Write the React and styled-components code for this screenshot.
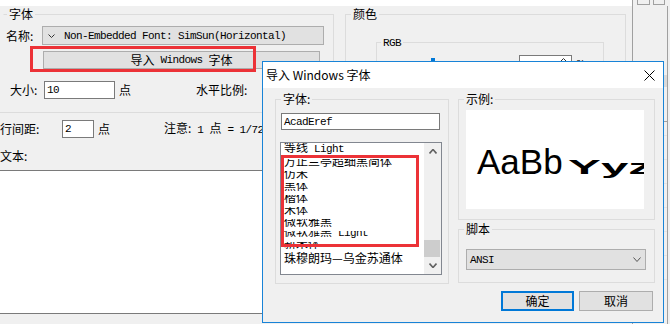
import styled, { createGlobalStyle } from "styled-components";

const GlobalStyle = createGlobalStyle`
  html, body { margin: 0; padding: 0; }
  body {
    background: #f0f0f0;
    font-family: "Noto Sans CJK SC", "Liberation Sans", sans-serif;
    font-size: 12px;
    line-height: 14px;
    color: #000;
  }
  * { box-sizing: border-box; }
`;

const Page = styled.div`
  position: relative;
  width: 670px;
  height: 324px;
  overflow: hidden;
  display: flex;
  background: #f0f0f0;
`;

// SimSun-like ascii: 6px per char
const Latin = styled.span`
  font-family: "Liberation Mono", monospace;
  font-size: 11px;
  letter-spacing: -0.6px;
  white-space: pre;
`;

/* ---------- background window ---------- */

const MainArea = styled.div`
  width: 632px;
  display: flex;
  flex-direction: column;
`;

const TopStrip = styled.div`
  height: 6px;
  background: #fff;
`;

const GroupsRow = styled.div`
  height: 106px;
  display: flex;
  align-items: flex-start;
  overflow: hidden;
`;

const GroupBox = styled.fieldset`
  margin: 0;
  padding: 0;
  border: 1px solid #dcdcdc;
  min-width: 0;
`;

const Legend = styled.legend`
  margin-left: ${({ $indent }) => $indent ?? 5}px;
  padding: 0 2px;
  line-height: 14px;
`;

const FontGroup = styled(GroupBox)`
  margin: 1px 0 0 3px;
  width: 331px;
  height: 99px;
  border-left-color: transparent;
  border-bottom: none;
  padding: 5px 0 0 2px;
`;

const FormRow = styled.div`
  display: flex;
  align-items: center;
  height: ${({ $h }) => $h ?? 18}px;
  margin-top: ${({ $top }) => $top ?? 0}px;
  padding-left: ${({ $pad }) => $pad ?? 0}px;
`;

const FieldLabel = styled.span`
  width: ${({ $w }) => $w}px;
  flex: none;
  white-space: nowrap;
`;

const Text = styled.span`
  margin-left: ${({ $left }) => $left ?? 0}px;
  white-space: nowrap;
`;

const ComboBox = styled.div`
  width: ${({ $w }) => $w}px;
  height: ${({ $h }) => $h ?? 19}px;
  background: #e1e1e1;
  border: 1px solid #adadad;
  display: flex;
  align-items: center;
  gap: 9px;
  padding-left: 5px;
`;

const PushButton = styled.div`
  width: ${({ $w }) => $w}px;
  height: 18px;
  background: #e1e1e1;
  border: 1px solid #adadad;
  display: flex;
  align-items: center;
  justify-content: center;
  white-space: nowrap;
`;

const TextBox = styled.div`
  width: ${({ $w }) => $w}px;
  height: ${({ $h }) => $h ?? 18}px;
  background: #fff;
  border: 1px solid #7a7a7a;
  display: flex;
  align-items: center;
  padding-left: 2px;
  flex: none;
`;

const Separator = styled.div`
  height: 1px;
  background: #dcdcdc;
`;

const TextCaption = styled.div`
  margin: 11px 0 7px;
  height: 14px;
`;

const TextArea = styled.div`
  height: 144px;
  background: #fff;
  border-top: 1px solid #7a7a7a;
  border-bottom: 1px solid #7a7a7a;
`;

const ColorGroup = styled(GroupBox)`
  margin: 1px 0 0 11px;
  width: 281px;
  height: 130px;
`;

const RgbGroup = styled(GroupBox)`
  margin: 13px 0 0 30px;
  width: 228px;
  height: 70px;
`;

const SliderRow = styled.div`
  display: flex;
  align-items: flex-start;
  height: 20px;
  margin-top: 5px;
  padding-left: 36px;
`;

const SliderLabel = styled.span`
  width: 12px;
  margin-top: 1px;
  flex: none;
`;

const Slider = styled.div`
  width: 80px;
  margin: 3px 0 0 6px;
  height: 14px;
  display: flex;
  align-items: center;
`;

const SliderThumb = styled.div`
  width: 4px;
  height: 14px;
  background: #0078d7;
`;

const SliderTrack = styled.div`
  flex: 1;
  height: 3px;
  background: #d6d6d6;
`;

const SpinBox = styled(TextBox)`
  margin-left: 8px;
  height: 20px;
  padding: 0 4px 0 5px;
  justify-content: space-between;
  align-items: flex-start;
  padding-top: 2px;
`;

const RightRail = styled.div`
  width: 38px;
  border-left: 1px solid #a0a0a0;
  display: flex;
  flex-direction: column;
`;

const RailTop = styled.div`
  height: 6px;
  display: flex;
  gap: 3px;
  padding-left: 4px;
`;

const RailBox = styled.div`
  width: ${({ $w }) => $w}px;
  height: 5px;
  border: 1px solid #a0a0a0;
  border-top: none;
`;

const RailBody = styled.div`
  flex: 1;
  margin-right: 2px;
  border-right: 1px solid #a0a0a0;
  padding-top: 69px;
`;

const RailHeader = styled.div`
  height: 12px;
  background: #dadada;
`;

const RailRow = styled.div`
  height: ${({ $h }) => $h ?? 24}px;
  border-bottom: 1px solid ${({ $dark }) => ($dark ? "#a0a0a0" : "#e4e4e4")};
`;

/* ---------- modal dialog ---------- */

const Dialog = styled.div`
  position: absolute;
  left: 262px;
  top: 61px;
  width: 402px;
  height: 262px;
  border: 1px solid #1883d7;
  background: #f0f0f0;
  display: flex;
  flex-direction: column;
`;

const TitleBar = styled.div`
  height: 26px;
  background: #fff;
  display: flex;
  align-items: center;
  justify-content: space-between;
  padding: 0 8px 0 3px;
`;

const DialogBody = styled.div`
  flex: 1;
  display: flex;
  gap: 9px;
  padding: 4px 0 0 12px;
`;

const FaceGroup = styled(GroupBox)`
  width: 174px;
  height: 192px;
`;

const NameInput = styled(TextBox)`
  margin: 7px 0 0 5px;
  width: 159px;
  height: 17px;
`;

const ListBox = styled.div`
  margin: 12px 0 0 4px;
  width: 162px;
  height: 133px;
  background: #fff;
  border: 1px solid #828790;
  display: flex;
`;

const ListItems = styled.div`
  flex: 1;
  padding-left: 3px;
  overflow: hidden;
  display: flex;
  flex-direction: column;
`;

const ListItem = styled.div`
  height: ${({ $h }) => $h}px;
  flex: none;
  display: flex;
  align-items: flex-end;
  overflow: hidden;
  white-space: nowrap;
  line-height: 14px;
  clip-path: inset(${({ $clip }) => $clip ?? 0}px 0 0 0);
`;

const ScrollBar = styled.div`
  width: 17px;
  background: #f0f0f0;
  display: flex;
  flex-direction: column;
`;

const ScrollArrow = styled.div`
  height: 17px;
  display: flex;
  align-items: center;
  justify-content: center;
`;

const ScrollTrack = styled.div`
  flex: 1;
  display: flex;
  flex-direction: column;
  justify-content: flex-end;
`;

const ScrollThumb = styled.div`
  height: 17px;
  margin-right: 1px;
  background: #cdcdcd;
`;

const RightCol = styled.div`
  width: 197px;
  display: flex;
  flex-direction: column;
`;

const SampleGroup = styled(GroupBox)`
  height: 128px;
`;

const Preview = styled.div`
  margin: 4px 0 0 7px;
  width: 178px;
  height: 99px;
  background: #fff;
  overflow: hidden;
  white-space: nowrap;
  padding: 34px 0 0 11px;
  font-family: "Liberation Sans", sans-serif;
  font-size: 35px;
  line-height: 35px;
`;

const Squashed = styled.span`
  display: inline-block;
  margin-left: 5px;
  font-weight: 700;
  font-size: 34px;
  transform: scale(1.45, 0.6);
  transform-origin: 0 80%;
`;

const ScriptGroup = styled(GroupBox)`
  margin-top: 2px;
  height: 61px;
`;

const ScriptSelect = styled.div`
  margin: 13px 0 0 7px;
  width: 180px;
  height: 21px;
  background: #e1e1e1;
  border: 1px solid #adadad;
  display: flex;
  align-items: center;
  justify-content: space-between;
  padding: 0 4px 0 3px;
`;

const ButtonRow = styled.div`
  margin-top: 8px;
  display: flex;
  justify-content: flex-end;
  gap: 5px;
  padding-right: 2px;
`;

const DialogButton = styled.div`
  width: ${({ $w }) => $w}px;
  height: 20px;
  background: #e1e1e1;
  border: ${({ $primary }) => ($primary ? "2px solid #0078d7" : "1px solid #adadad")};
  display: flex;
  align-items: center;
  justify-content: center;
`;

const RedBox = styled.div`
  position: absolute;
  left: ${({ $x }) => $x}px;
  top: ${({ $y }) => $y}px;
  width: ${({ $w }) => $w}px;
  height: ${({ $h }) => $h}px;
  border: 3px solid #ec3237;
  pointer-events: none;
`;

const Chevron = ({ up, color = "#333", w = 7, h = 4, sw = 1 }) => (
  <svg width={w} height={h} viewBox={`0 0 ${w} ${h}`}>
    <polyline
      points={
        up
          ? `0.5,${h - 0.5} ${w / 2},0.5 ${w - 0.5},${h - 0.5}`
          : `0.5,0.5 ${w / 2},${h - 0.5} ${w - 0.5},0.5`
      }
      fill="none"
      stroke={color}
      strokeWidth={sw}
    />
  </svg>
);

const CloseIcon = () => (
  <svg width="11" height="11" viewBox="0 0 11 11">
    <path d="M0.5 0.5L10.5 10.5M10.5 0.5L0.5 10.5" stroke="#000" strokeWidth="1" />
  </svg>
);

const fonts = [
  { name: "等线", latin: " Light", h: 13 },
  { name: "方正兰亭超细黑简体", h: 12, clip: 3 },
  { name: "仿宋", h: 12, clip: 3 },
  { name: "黑体", h: 12, clip: 3 },
  { name: "楷体", h: 12, clip: 3 },
  { name: "宋体", h: 12, clip: 3 },
  { name: "微软雅黑", h: 12, clip: 3 },
  { name: "微软雅黑", latin: " Light", h: 12, clip: 3 },
  { name: "新宋体", h: 10, clip: 2 },
  { name: "珠穆朗玛—乌金苏通体", h: 15 },
];

export default function App() {
  return (
    <Page>
      <GlobalStyle />

      <MainArea>
        <TopStrip />
        <GroupsRow>
          <FontGroup>
            <Legend $indent={1}>字体</Legend>
            <FormRow $h={19}>
              <FieldLabel $w={36}>名称:</FieldLabel>
              <ComboBox $w={282}>
                <Chevron />
                <Latin>Non-Embedded Font: SimSun(Horizontal)</Latin>
              </ComboBox>
            </FormRow>
            <FormRow $top={6} $pad={37}>
              <PushButton $w={277}>
                导入<Latin> Windows </Latin>字体
              </PushButton>
            </FormRow>
            <FormRow $top={12} $pad={4}>
              <FieldLabel $w={34}>大小:</FieldLabel>
              <TextBox $w={71}>
                <Latin>10</Latin>
              </TextBox>
              <Text $left={4}>点</Text>
              <Text $left={65}>水平比例:</Text>
            </FormRow>
          </FontGroup>

          <ColorGroup>
            <Legend>颜色</Legend>
            <RgbGroup>
              <Legend $indent={4}>
                <Latin>RGB</Latin>
              </Legend>
              <SliderRow>
                <SliderLabel>
                  <Latin>R:</Latin>
                </SliderLabel>
                <Slider>
                  <SliderThumb />
                  <SliderTrack />
                </Slider>
                <SpinBox $w={53}>
                  <Latin>0</Latin>
                  <Chevron up w={7} h={4} />
                </SpinBox>
                <Text $left={5}>
                  <Latin>%</Latin>
                </Text>
              </SliderRow>
            </RgbGroup>
          </ColorGroup>
        </GroupsRow>

        <Separator />

        <FormRow $top={7}>
          <FieldLabel $w={62}>行间距:</FieldLabel>
          <TextBox $w={32}>
            <Latin>2</Latin>
          </TextBox>
          <Text $left={4}>点</Text>
          <Text $left={54}>
            注意:<Latin> 1 </Latin>点<Latin> = 1/72</Latin>
          </Text>
        </FormRow>
        <TextCaption>文本:</TextCaption>
        <TextArea />
      </MainArea>

      <RightRail>
        <RailTop>
          <RailBox $w={13} />
          <RailBox $w={12} />
        </RailTop>
        <RailBody>
          <RailHeader />
          <RailRow $h={35} $dark />
          <RailRow $h={14} />
          <RailRow />
          <RailRow />
          <RailRow />
          <RailRow />
          <RailRow />
          <RailRow />
        </RailBody>
      </RightRail>

      <RedBox $x={30} $y={46} $w={226} $h={26} />

      <Dialog>
        <TitleBar>
          <span>导入 Windows 字体</span>
          <CloseIcon />
        </TitleBar>
        <DialogBody>
          <FaceGroup>
            <Legend>字体:</Legend>
            <NameInput>
              <Latin>AcadEref</Latin>
            </NameInput>
            <ListBox>
              <ListItems>
                {fonts.map((f, i) => (
                  <ListItem key={i} $h={f.h} $clip={f.clip}>
                    <span>
                      {f.name}
                      {f.latin && <Latin>{f.latin}</Latin>}
                    </span>
                  </ListItem>
                ))}
              </ListItems>
              <ScrollBar>
                <ScrollArrow>
                  <Chevron up w={8} h={5} color="#606060" sw={1.6} />
                </ScrollArrow>
                <ScrollTrack>
                  <ScrollThumb />
                </ScrollTrack>
                <ScrollArrow>
                  <Chevron w={8} h={5} color="#606060" sw={1.6} />
                </ScrollArrow>
              </ScrollBar>
            </ListBox>
          </FaceGroup>

          <RightCol>
            <SampleGroup>
              <Legend>示例:</Legend>
              <Preview>
                AaBb<Squashed>Yyz</Squashed>
              </Preview>
            </SampleGroup>
            <ScriptGroup>
              <Legend>脚本</Legend>
              <ScriptSelect>
                <Latin>ANSI</Latin>
                <Chevron w={8} h={5} color="#555" />
              </ScriptSelect>
            </ScriptGroup>
            <ButtonRow>
              <DialogButton $w={73} $primary>
                确定
              </DialogButton>
              <DialogButton $w={74}>取消</DialogButton>
            </ButtonRow>
          </RightCol>
        </DialogBody>
      </Dialog>

      <RedBox $x={281} $y={155} $w={138} $h={92} />
    </Page>
  );
}
